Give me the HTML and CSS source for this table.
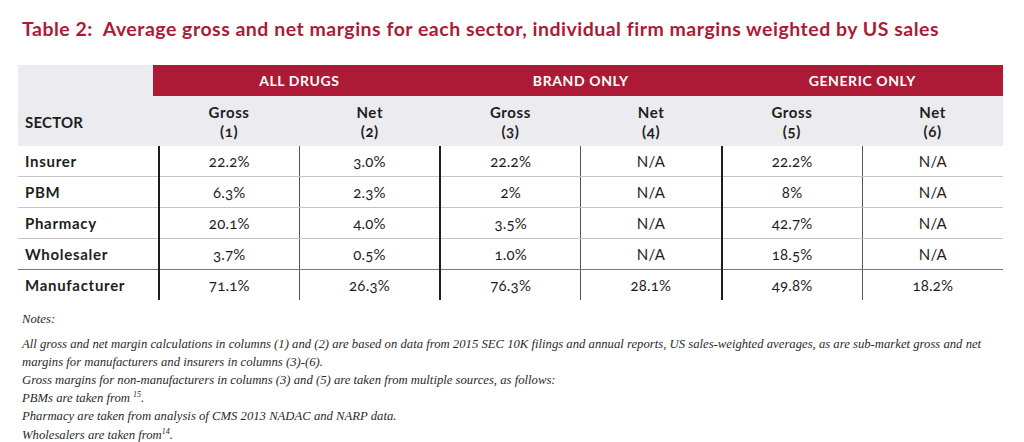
FILE: index.html
```html
<!DOCTYPE html>
<html>
<head>
<meta charset="utf-8">
<link rel="stylesheet" href="styles.css">
</head>
<body>
<div class="page">
  <h1 class="title">Table 2:&nbsp; Average gross and net margins for each sector, individual firm margins weighted by US sales</h1>
  <table class="margins">
    <colgroup>
      <col><col><col><col><col><col><col>
    </colgroup>
    <thead>
      <tr class="group-row">
        <th class="blank"></th>
        <th colspan="2" class="group first-group">ALL DRUGS</th>
        <th colspan="2" class="group">BRAND ONLY</th>
        <th colspan="2" class="group">GENERIC ONLY</th>
      </tr>
      <tr class="sub-row">
        <th class="sector">SECTOR</th>
        <th>Gross<br>(1)</th>
        <th>Net<br>(2)</th>
        <th>Gross<br>(3)</th>
        <th>Net<br>(4)</th>
        <th>Gross<br>(5)</th>
        <th>Net<br>(6)</th>
      </tr>
    </thead>
    <tbody>
      <tr>
        <td class="label">Insurer</td>
        <td class="g">22.2%</td><td class="n">3.0%</td>
        <td class="g">22.2%</td><td class="n">N/A</td>
        <td class="g">22.2%</td><td class="n">N/A</td>
      </tr>
      <tr>
        <td class="label">PBM</td>
        <td class="g">6.3%</td><td class="n">2.3%</td>
        <td class="g">2%</td><td class="n">N/A</td>
        <td class="g">8%</td><td class="n">N/A</td>
      </tr>
      <tr>
        <td class="label">Pharmacy</td>
        <td class="g">20.1%</td><td class="n">4.0%</td>
        <td class="g">3.5%</td><td class="n">N/A</td>
        <td class="g">42.7%</td><td class="n">N/A</td>
      </tr>
      <tr class="before-last">
        <td class="label">Wholesaler</td>
        <td class="g">3.7%</td><td class="n">0.5%</td>
        <td class="g">1.0%</td><td class="n">N/A</td>
        <td class="g">18.5%</td><td class="n">N/A</td>
      </tr>
      <tr class="last">
        <td class="label">Manufacturer</td>
        <td class="g">71.1%</td><td class="n">26.3%</td>
        <td class="g">76.3%</td><td class="n">28.1%</td>
        <td class="g">49.8%</td><td class="n">18.2%</td>
      </tr>
    </tbody>
  </table>
  <div class="notes">
    <p class="notes-head">Notes:</p>
    <p>All gross and net margin calculations in columns (1) and (2) are based on data from 2015 SEC 10K filings and annual reports, US sales-weighted averages, as are sub-market gross and net margins for manufacturers and insurers in columns (3)-(6).</p>
    <p>Gross margins for non-manufacturers in columns (3) and (5) are taken from multiple sources, as follows:</p>
    <p>PBMs are taken from <sup>15</sup>.</p>
    <p>Pharmacy are taken from analysis of CMS 2013 NADAC and NARP data.</p>
    <p>Wholesalers are taken from<sup>14</sup>.</p>
  </div>
</div>
</body>
</html>
```

FILE: styles.css
```css
html, body {
  margin: 0;
  padding: 0;
  background: #ffffff;
}

.page {
  padding: 18px 21px 0 18px;
  font-family: "Lato", "Open Sans", sans-serif;
}

.title {
  margin: 0 0 0 4px;
  font-size: 19.5px;
  line-height: 22px;
  font-weight: 700;
  letter-spacing: 0.5px;
  color: #ad1a35;
  white-space: nowrap;
}

.margins {
  margin-top: 25px;
  width: 985px;
  table-layout: fixed;
  border-collapse: collapse;
  border-spacing: 0;
  font-feature-settings: "onum" 1;
  color: #1e1e1e;
}

.margins col {
  width: 140.7px;
}

.margins th, .margins td {
  padding: 0;
  text-align: center;
}

.group-row th {
  height: 31px;
  background: #ecebef;
}

.group-row .group {
  background: #ad1a35;
  color: #ffffff;
  font-size: 14px;
  font-weight: 700;
  letter-spacing: 0.6px;
}

.group-row .first-group {
  box-shadow: -6px 0 0 #ad1a35;
}

.sub-row th {
  height: 48px;
  background: #ecebef;
  font-size: 15px;
  line-height: 19px;
  font-weight: 700;
  letter-spacing: 0.6px;
  vertical-align: middle;
  padding-top: 2px;
}

.sub-row .sector {
  text-align: left;
  padding-left: 7px;
  font-size: 15px;
  letter-spacing: 0.2px;
}

.margins tbody td {
  height: 30px;
  font-size: 15px;
  letter-spacing: 0.2px;
  border-bottom: 1.5px solid #c4c4c8;
}

.margins tbody td.label {
  text-align: left;
  padding-left: 7px;
  font-size: 15px;
  font-weight: 700;
  letter-spacing: 0.7px;
  border-right: 2px solid #1e1e1e;
}

.margins tbody td.g {
  border-right: 1px solid #555555;
}

.margins tbody td.n {
  border-right: 2px solid #1e1e1e;
}

.margins tbody td.n:last-child {
  border-right: none;
}

.margins tbody tr.before-last td {
  border-bottom: 1px solid #777777;
}

.margins tbody tr.last td {
  border-bottom: none;
}

.notes {
  margin: 10px 0 0 4px;
  font-family: "Liberation Serif", serif;
  font-style: italic;
  font-size: 12.7px;
  line-height: 18.1px;
  color: #2a2a2a;
}

.notes p {
  margin: 0;
}

.notes .notes-head {
  margin-bottom: 7px;
}

.notes sup {
  font-size: 8px;
  line-height: 0;
  vertical-align: 5px;
}
```
